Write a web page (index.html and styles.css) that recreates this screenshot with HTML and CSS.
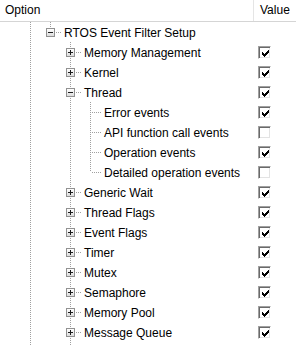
FILE: index.html
```html
<!DOCTYPE html>
<html lang="en">
<head>
    <meta charset="UTF-8">
    <title>RTOS Event Filter Setup</title>
    <link rel="stylesheet" href="styles.css">
</head>
<body>
    <div class="grid">
        <div class="header">
            <div class="col-option">Option</div>
            <div class="col-value">Value</div>
        </div>

        <div class="row">
            <div class="tree"><span class="g pipe"></span><span class="g end"><span class="box minus"></span></span><span class="label">RTOS Event Filter Setup</span></div>
            <div class="val"></div>
        </div>
        <div class="row">
            <div class="tree"><span class="g pipe"></span><span class="g"></span><span class="g tee"><span class="box"></span></span><span class="label">Memory Management</span></div>
            <div class="val"><span class="check on"></span></div>
        </div>
        <div class="row">
            <div class="tree"><span class="g pipe"></span><span class="g"></span><span class="g tee"><span class="box"></span></span><span class="label">Kernel</span></div>
            <div class="val"><span class="check on"></span></div>
        </div>
        <div class="row">
            <div class="tree"><span class="g pipe"></span><span class="g"></span><span class="g tee"><span class="box minus"></span></span><span class="label">Thread</span></div>
            <div class="val"><span class="check on"></span></div>
        </div>
        <div class="row">
            <div class="tree"><span class="g pipe"></span><span class="g"></span><span class="g pipe"></span><span class="g tee"></span><span class="label">Error events</span></div>
            <div class="val"><span class="check on"></span></div>
        </div>
        <div class="row">
            <div class="tree"><span class="g pipe"></span><span class="g"></span><span class="g pipe"></span><span class="g tee"></span><span class="label">API function call events</span></div>
            <div class="val"><span class="check"></span></div>
        </div>
        <div class="row">
            <div class="tree"><span class="g pipe"></span><span class="g"></span><span class="g pipe"></span><span class="g tee"></span><span class="label">Operation events</span></div>
            <div class="val"><span class="check on"></span></div>
        </div>
        <div class="row">
            <div class="tree"><span class="g pipe"></span><span class="g"></span><span class="g pipe"></span><span class="g end"></span><span class="label">Detailed operation events</span></div>
            <div class="val"><span class="check"></span></div>
        </div>
        <div class="row">
            <div class="tree"><span class="g pipe"></span><span class="g"></span><span class="g tee"><span class="box"></span></span><span class="label">Generic Wait</span></div>
            <div class="val"><span class="check on"></span></div>
        </div>
        <div class="row">
            <div class="tree"><span class="g pipe"></span><span class="g"></span><span class="g tee"><span class="box"></span></span><span class="label">Thread Flags</span></div>
            <div class="val"><span class="check on"></span></div>
        </div>
        <div class="row">
            <div class="tree"><span class="g pipe"></span><span class="g"></span><span class="g tee"><span class="box"></span></span><span class="label">Event Flags</span></div>
            <div class="val"><span class="check on"></span></div>
        </div>
        <div class="row">
            <div class="tree"><span class="g pipe"></span><span class="g"></span><span class="g tee"><span class="box"></span></span><span class="label">Timer</span></div>
            <div class="val"><span class="check on"></span></div>
        </div>
        <div class="row">
            <div class="tree"><span class="g pipe"></span><span class="g"></span><span class="g tee"><span class="box"></span></span><span class="label">Mutex</span></div>
            <div class="val"><span class="check on"></span></div>
        </div>
        <div class="row">
            <div class="tree"><span class="g pipe"></span><span class="g"></span><span class="g tee"><span class="box"></span></span><span class="label">Semaphore</span></div>
            <div class="val"><span class="check on"></span></div>
        </div>
        <div class="row">
            <div class="tree"><span class="g pipe"></span><span class="g"></span><span class="g tee"><span class="box"></span></span><span class="label">Memory Pool</span></div>
            <div class="val"><span class="check on"></span></div>
        </div>
        <div class="row">
            <div class="tree"><span class="g pipe"></span><span class="g"></span><span class="g tee"><span class="box"></span></span><span class="label">Message Queue</span></div>
            <div class="val"><span class="check on"></span></div>
        </div>
        <div class="row">
            <div class="tree"><span class="g pipe"></span><span class="g"></span><span class="g pipe"></span></div>
            <div class="val"></div>
        </div>
    </div>

    <script>
        // put the tick glyph into every checked box
        var tick = '<svg width="7" height="7" viewBox="0 0 7 7"><path d="M6 0h1v1h-1z M5 1h2v1h-2z M0 2h1v1h-1z M4 2h3v1h-3z M0 3h2v1h-2z M3 3h3v1h-3z M0 4h5v1h-5z M1 5h3v1h-3z M2 6h1v1h-1z" fill="#000"/></svg>';
        document.querySelectorAll('.check.on').forEach(function(el) {
            el.innerHTML = tick;
        });
    </script>
</body>
</html>
```

FILE: styles.css
```css
body {
    margin: 0;
    background: #fff;
    font-family: "Liberation Sans", Arial, sans-serif;
    font-size: 12px;
    color: #000;
    overflow: hidden;
}
.grid {
    width: 296px;
}
.header {
    display: flex;
    height: 22px;
    border-bottom: 1px solid #d5d5d5;
    box-sizing: border-box;
    line-height: 21px;
}
.col-option {
    width: 254px;
    padding-left: 5px;
    box-sizing: border-box;
    border-right: 1px solid #e5e5e5;
}
.col-value {
    padding-left: 6px;
}
.row {
    display: flex;
    height: 20px;
}
.tree {
    width: 254px;
    display: flex;
    padding-left: 20px;
    box-sizing: border-box;
}
.g {
    width: 20px;
    height: 20px;
    flex: none;
    display: flex;
    align-items: flex-start;
}
.pipe {
    background: repeating-linear-gradient(to bottom, #a0a0a0 0 1px, transparent 1px 2px) 10px 0 / 1px 20px no-repeat;
}
.tee,
.end {
    width: 22px;
}
.tee {
    background:
        repeating-linear-gradient(to bottom, #a0a0a0 0 1px, transparent 1px 2px) 10px 0 / 1px 20px no-repeat,
        repeating-linear-gradient(to right, #a0a0a0 0 1px, transparent 1px 2px) 12px 10px / 10px 1px no-repeat;
}
.end {
    background:
        repeating-linear-gradient(to bottom, #a0a0a0 0 1px, transparent 1px 2px) 10px 0 / 1px 10px no-repeat,
        repeating-linear-gradient(to right, #a0a0a0 0 1px, transparent 1px 2px) 12px 10px / 10px 1px no-repeat;
}
.box {
    width: 9px;
    height: 9px;
    margin: 6px 0 0 6px;
    box-sizing: border-box;
    border: 1px solid #919191;
    background:
        linear-gradient(#1c1c1c, #1c1c1c) center / 5px 1px no-repeat,
        linear-gradient(#1c1c1c, #1c1c1c) center / 1px 5px no-repeat,
        linear-gradient(#fff, #dcdcdc);
}
.box.minus {
    background:
        linear-gradient(#1c1c1c, #1c1c1c) center / 5px 1px no-repeat,
        linear-gradient(#fff, #dcdcdc);
}
.label {
    padding: 1px 0 0 2px;
    line-height: 20px;
    white-space: nowrap;
}
.val {
    padding-left: 4px;
}
.check {
    display: flex;
    align-items: center;
    justify-content: center;
    width: 13px;
    height: 13px;
    margin-top: 4px;
    box-sizing: border-box;
    border: 1px solid;
    border-color: #a0a0a0 #fff #fff #a0a0a0;
    box-shadow: inset 1px 1px #696969, inset -1px -1px #e3e3e3;
    background: #fff;
}
.check svg {
    display: block;
    margin: 1px 0 0 1px;
}
```
